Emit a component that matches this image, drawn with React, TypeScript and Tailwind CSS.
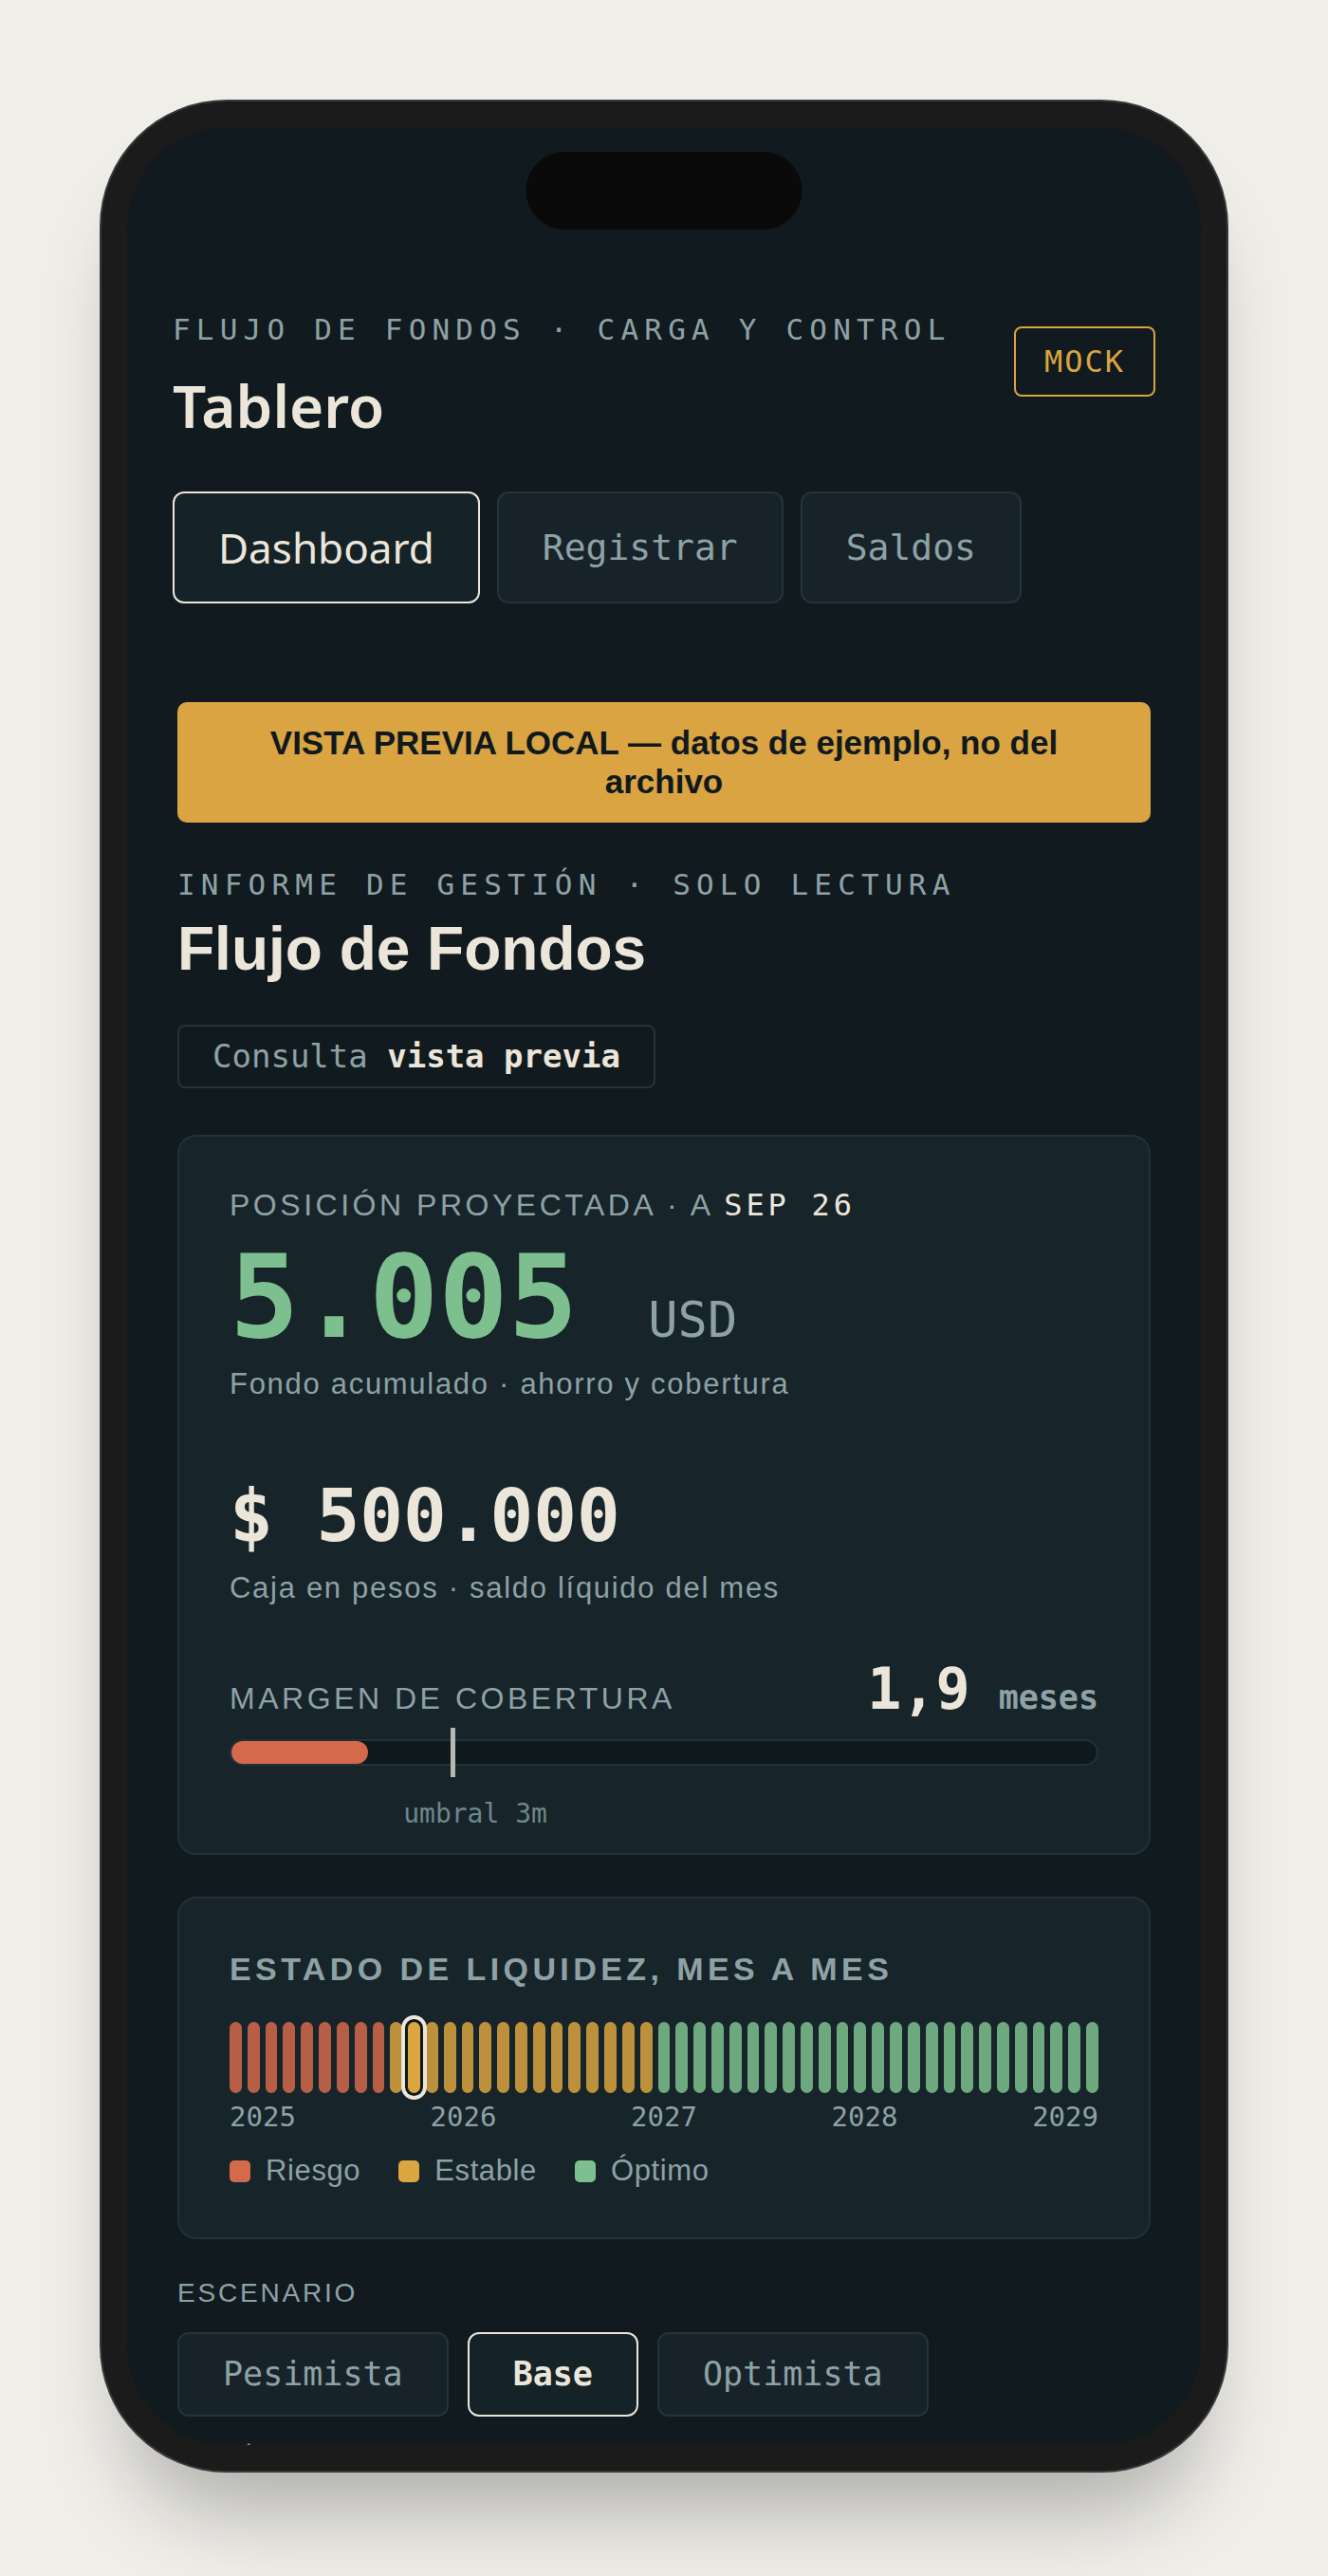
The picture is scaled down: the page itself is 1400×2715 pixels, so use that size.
import React from 'react';

const MONO = "font-['DejaVu_Sans_Mono',monospace]";
const SANS = "font-['Liberation_Sans',Arial,sans-serif]";
const UI = "font-['Noto_Sans',sans-serif]";

const eyebrow = `${MONO} text-[31px] leading-[36px] tracking-[6.2px] text-[#8ea2a5]`;
const caps = `${SANS} text-[32px] leading-[38px] tracking-[0.11em] text-[#8ea2a5]`;
const caption = `${SANS} text-[31px] leading-[36px] tracking-[0.055em] text-[#8ea2a5]`;

type Level = 'risk' | 'stable' | 'optimal';

// 49 months, Jan 2025 .. Jan 2029
const months: Level[] = [
  ...Array.from({ length: 9 }, () => 'risk' as Level),
  ...Array.from({ length: 15 }, () => 'stable' as Level),
  ...Array.from({ length: 25 }, () => 'optimal' as Level),
];
const CURRENT = 10;

const barColor: Record<Level, string> = {
  risk: 'bg-[#d4694b]',
  stable: 'bg-[#dba53f]',
  optimal: 'bg-[#7dbf8e]',
};

const coverage = 1.9;
const coverageMax = 12;

function NavTab({ label, active }: { label: string; active?: boolean }) {
  return (
    <button
      className={`rounded-[12px] border-2 px-[46px] py-[34px] leading-[46px] ${
        active
          ? `${UI} border-[#ece6da] bg-[#152227] text-[44px] text-[#ece6da]`
          : `${MONO} border-[#243439] bg-[#172328] text-[38px] text-[#8ea2a5]`
      }`}
    >
      {label}
    </button>
  );
}

function ScenarioButton({ label, active }: { label: string; active?: boolean }) {
  return (
    <button
      className={`${MONO} rounded-[12px] border-2 px-[46px] py-[22px] text-[35px] leading-[41px] ${
        active
          ? 'border-[#ece6da] bg-[#152227] font-bold text-[#ece6da]'
          : 'border-[#243439] bg-[#172328] text-[#8ea2a5]'
      }`}
    >
      {label}
    </button>
  );
}

function LegendItem({ color, label }: { color: string; label: string }) {
  return (
    <div className="flex items-center gap-[16px]">
      <span className={`h-[23px] w-[22px] rounded-[5px] ${color}`} />
      <span>{label}</span>
    </div>
  );
}

export default function App() {
  return (
    <div className="flex min-h-[2715px] justify-center bg-[#efeee9] pt-[107px] pb-[111px]">
      <div className="h-[2497px] w-[1186px] rounded-[132px] bg-[#1b1b1c] p-[27px] shadow-[0_0_0_2px_#38383a,0_70px_90px_-30px_rgba(0,0,0,0.28)]">
        <div className="relative h-full overflow-hidden rounded-[106px] bg-[#111a1f]">
          {/* Dynamic island */}
          <div className="absolute left-1/2 top-[26px] h-[82px] w-[291px] -translate-x-1/2 rounded-full bg-[#0a0a0a]" />

          {/* Header */}
          <header className="px-[48px] pt-[195px]">
            <div className="flex items-start justify-between">
              <div>
                <p className={eyebrow}>FLUJO DE FONDOS · CARGA Y CONTROL</p>
                <h1 className={`${UI} mt-[31px] text-[62px] font-semibold leading-[62px] text-[#ece6da]`}>
                  Tablero
                </h1>
              </div>
              <span
                className={`${MONO} mt-[15px] rounded-[8px] border-2 border-[#d9a441] px-[30px] py-[17px] text-[32px] leading-[36px] tracking-[2px] text-[#d9a441]`}
              >
                MOCK
              </span>
            </div>
            <nav className="mt-[60px] flex gap-[18px]">
              <NavTab label="Dashboard" active />
              <NavTab label="Registrar" />
              <NavTab label="Saldos" />
            </nav>
          </header>

          <main className="px-[53px] pt-[104px]">
            {/* Banner */}
            <div
              className={`${SANS} rounded-[10px] bg-[#d9a441] px-[60px] pt-[22px] pb-[23px] text-center text-[35px] font-bold leading-[41px] text-[#10191d]`}
            >
              VISTA PREVIA LOCAL — datos de ejemplo, no del archivo
            </div>

            <p className={`${eyebrow} mt-[47px]`}>INFORME DE GESTIÓN · SOLO LECTURA</p>
            <h2 className={`${SANS} mt-[19px] text-[64px] font-bold leading-[63px] text-[#ece6da]`}>
              Flujo de Fondos
            </h2>

            <div
              className={`${MONO} mt-[48px] w-fit rounded-[8px] border-2 border-[#243439] px-[35px] py-[11px] text-[34px] leading-[41px] text-[#8ea2a5]`}
            >
              Consulta <span className="font-bold text-[#ece6da]">vista previa</span>
            </div>

            {/* Position card */}
            <section className="mt-[49px] rounded-[20px] border-2 border-[#233238] bg-[#17242a] px-[53px] pt-[53px] pb-[24px]">
              <p className={caps}>
                POSICIÓN PROYECTADA · A{' '}
                <span className={`${MONO} tracking-[3.8px] text-[#ece6da]`}>SEP 26</span>
              </p>
              <div className="mt-[17px] flex items-baseline">
                <span className={`${MONO} text-[122px] font-bold leading-[122px] text-[#7dbf8e]`}>5.005</span>
                <span className={`${MONO} ml-[74px] text-[52px] leading-[52px] text-[#8ea2a5]`}>USD</span>
              </div>
              <p className={`${caption} mt-[13px]`}>Fondo acumulado · ahorro y cobertura</p>

              <p className={`${MONO} mt-[82px] text-[76px] font-bold leading-[77px] text-[#ece6da]`}>$ 500.000</p>
              <p className={`${caption} mt-[20px]`}>Caja en pesos · saldo líquido del mes</p>

              <div className="mt-[58px] flex items-baseline justify-between">
                <span className={caps}>MARGEN DE COBERTURA</span>
                <span className="flex items-baseline">
                  <span className={`${MONO} text-[60px] font-bold leading-[60px] text-[#ece6da]`}>1,9</span>
                  <span className={`${MONO} ml-[30px] text-[35px] font-bold leading-[40px] text-[#8ea2a5]`}>meses</span>
                </span>
              </div>

              <div className="relative mt-[23px] h-[28px] rounded-full border-2 border-[#233238] bg-[#10191d]">
                <div
                  className="h-full rounded-full bg-[#d4694b]"
                  style={{ width: `${(coverage / coverageMax) * 100}%` }}
                />
                <span className="absolute left-[calc(25%+3px)] top-[-14px] h-[52px] w-[5px] bg-[#b8b8b2]" />
              </div>
              <p className={`${MONO} mt-[34px] pl-[20%] text-[28px] leading-[34px] text-[#6f878b]`}>umbral 3m</p>
            </section>

            {/* Liquidity card */}
            <section className="mt-[44px] rounded-[20px] border-2 border-[#233238] bg-[#17242a] px-[53px] pt-[54px] pb-[52px]">
              <h3 className={`${SANS} text-[34px] font-bold leading-[40px] tracking-[0.13em] text-[#8ea2a5]`}>
                ESTADO DE LIQUIDEZ, MES A MES
              </h3>
              <div className="mt-[36px] flex h-[75px] gap-[6px]">
                {months.map((m, i) => (
                  <span
                    key={i}
                    className={`flex-1 rounded-full ${barColor[m]} ${
                      i === CURRENT
                        ? 'relative z-10 shadow-[0_0_0_3px_#10191d,0_0_0_7px_#ece6da]'
                        : 'opacity-85'
                    }`}
                  />
                ))}
              </div>
              <div className={`${MONO} mt-[8px] flex justify-between text-[29px] leading-[34px] text-[#8ea2a5]`}>
                <span>2025</span>
                <span>2026</span>
                <span>2027</span>
                <span>2028</span>
                <span>2029</span>
              </div>
              <div className={`${SANS} mt-[22px] flex items-center gap-[40px] text-[31px] leading-[36px] tracking-[0.02em] text-[#8ea2a5]`}>
                <LegendItem color="bg-[#d4694b]" label="Riesgo" />
                <LegendItem color="bg-[#dba53f]" label="Estable" />
                <LegendItem color="bg-[#7dbf8e]" label="Óptimo" />
              </div>
            </section>

            <p className={`${SANS} mt-[40px] text-[28px] leading-[34px] tracking-[0.1em] text-[#8ea2a5]`}>ESCENARIO</p>
            <div className="mt-[24px] flex gap-[20px]">
              <ScenarioButton label="Pesimista" />
              <ScenarioButton label="Base" active />
              <ScenarioButton label="Optimista" />
            </div>

            <p className={`${MONO} mt-[28px] text-[28px] leading-[36px] tracking-[5px] text-[#8ea2a5]`}>PERÍODO</p>
          </main>
        </div>
      </div>
    </div>
  );
}
